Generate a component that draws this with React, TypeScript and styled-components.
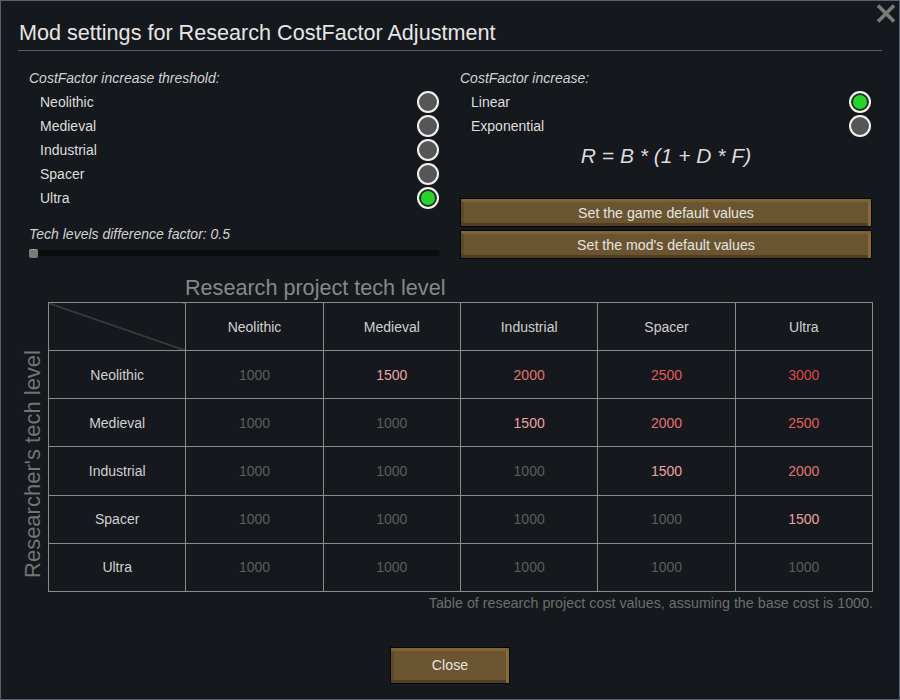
import styled, { createGlobalStyle } from "styled-components";

const GlobalStyle = createGlobalStyle`
  html, body {
    margin: 0;
    padding: 0;
    background: #15181c;
  }
  body {
    font-family: "Liberation Sans", Arial, sans-serif;
  }
`;

const levels = ["Neolithic", "Medieval", "Industrial", "Spacer", "Ultra"];

const costColor = (v: number) => {
  if (v >= 3000) return "#dc4949";
  if (v >= 2500) return "#e05d5d";
  if (v >= 2000) return "#e47373";
  if (v >= 1500) return "#eda3a3";
  return "#5d5d5d";
};

export default function App() {
  return (
    <>
      <GlobalStyle />
      <Window>
        <CloseX aria-label="close">
          <svg width="20" height="19" viewBox="0 0 20 19">
            <path d="M2 1.5 L18 17.5 M18 1.5 L2 17.5" stroke="#7b7b7b" strokeWidth="3.6" />
          </svg>
        </CloseX>

        <Header>
          <Title>Mod settings for Research CostFactor Adjustment</Title>
        </Header>

        <Settings>
          <Column>
            <SectionLabel>CostFactor increase threshold:</SectionLabel>
            {levels.map((l) => (
              <OptionRow key={l}>
                <span>{l}</span>
                <Radio $checked={l === "Ultra"} />
              </OptionRow>
            ))}
            <FactorLabel>Tech levels difference factor: 0.5</FactorLabel>
            <SliderTrack>
              <SliderThumb />
            </SliderTrack>
          </Column>

          <Column>
            <SectionLabel>CostFactor increase:</SectionLabel>
            <OptionRow>
              <span>Linear</span>
              <Radio $checked />
            </OptionRow>
            <OptionRow>
              <span>Exponential</span>
              <Radio />
            </OptionRow>
            <Formula>R = B * (1 + D * F)</Formula>
            <ButtonStack>
              <WideButton>Set the game default values</WideButton>
              <WideButton>Set the mod's default values</WideButton>
            </ButtonStack>
          </Column>
        </Settings>

        <TableSection>
          <TableTitle>Research project tech level</TableTitle>
          <SideLabelBox>
            <SideLabel>Researcher's tech level</SideLabel>
          </SideLabelBox>
          <CostTable>
            <tbody>
              <tr>
                <CornerCell />
                {levels.map((l) => (
                  <HeadCell key={l}>{l}</HeadCell>
                ))}
              </tr>
              {levels.map((r, ri) => (
                <tr key={r}>
                  <HeadCell>{r}</HeadCell>
                  {levels.map((c, ci) => {
                    const v = 1000 + Math.max(0, ci - ri) * 500;
                    return (
                      <ValueCell key={c} $color={costColor(v)}>
                        {v}
                      </ValueCell>
                    );
                  })}
                </tr>
              ))}
            </tbody>
          </CostTable>
          <Caption>
            Table of research project cost values, assuming the base cost is 1000.
          </Caption>
        </TableSection>

        <Footer>
          <CloseButton>Close</CloseButton>
        </Footer>
      </Window>
    </>
  );
}

const Window = styled.div`
  position: relative;
  box-sizing: border-box;
  width: 900px;
  height: 700px;
  border: 1px solid #586070;
  background: #15181c;
  padding: 0 17px;
  display: flex;
  flex-direction: column;
  color: #dcdcdc;
`;

const CloseX = styled.div`
  position: absolute;
  top: 3px;
  right: 3px;
  width: 20px;
  height: 19px;
  display: flex;
`;

const Header = styled.div`
  box-sizing: border-box;
  height: 50px;
  display: flex;
  align-items: flex-end;
  padding-bottom: 5px;
  border-bottom: 1px solid #5e5e5e;
`;

const Title = styled.div`
  font-size: 21.6px;
  line-height: 24px;
  color: #e6e6e6;
  padding-left: 1px;
`;

const Settings = styled.div`
  display: grid;
  grid-template-columns: 411px 412px;
  column-gap: 20px;
  margin-top: 15px;
  padding-left: 11px;
`;

const Column = styled.div`
  display: flex;
  flex-direction: column;
`;

const SectionLabel = styled.div`
  font-size: 14px;
  font-style: italic;
  line-height: 24px;
  color: #d2d2d2;
`;

const OptionRow = styled.div`
  display: flex;
  align-items: center;
  justify-content: space-between;
  height: 24px;
  padding-left: 11px;
  padding-right: 1px;
  font-size: 14px;
  color: #dedede;
`;

const Radio = styled.span<{ $checked?: boolean }>`
  box-sizing: border-box;
  width: 22px;
  height: 22px;
  border-radius: 50%;
  border: 2px solid #f2f2f2;
  background: ${(p) => (p.$checked ? "#27d42a" : "#565656")};
  box-shadow: ${(p) => (p.$checked ? "inset 0 0 0 2px #2b2b2b" : "none")};
`;

const FactorLabel = styled(SectionLabel)`
  margin-top: 12px;
`;

const SliderTrack = styled.div`
  margin-top: 4px;
  height: 6px;
  border-radius: 3px;
  background: #0b0c0e;
  display: flex;
  align-items: center;
`;

const SliderThumb = styled.div`
  width: 9px;
  height: 9px;
  border-radius: 2px;
  background: #7a7a7a;
  border-top: 1px solid #9a9a9a;
  box-sizing: border-box;
`;

const Formula = styled.div`
  height: 36px;
  line-height: 36px;
  text-align: center;
  font-size: 21px;
  font-style: italic;
  color: #dcdcdc;
`;

const ButtonStack = styled.div`
  display: flex;
  flex-direction: column;
  gap: 3px;
  margin-top: 24px;
`;

const BrownButton = styled.div`
  box-sizing: border-box;
  display: flex;
  align-items: center;
  justify-content: center;
  border: 1px solid #050505;
  background: #6b5531;
  box-shadow: inset 0 3px 0 #7e6435, inset -3px 0 0 #866b3b,
    inset 0 -3px 0 #4f3e21, inset 3px 0 0 #5f4a29;
  color: #e4e4e4;
  font-size: 14.2px;
`;

const WideButton = styled(BrownButton)`
  height: 29px;
`;

const TableSection = styled.div`
  display: grid;
  grid-template-columns: 30px 825px;
  margin-top: 17px;
`;

const TableTitle = styled.div`
  grid-column: 2;
  margin-left: 137px;
  font-size: 21.6px;
  line-height: 24px;
  height: 26px;
  color: #888888;
`;

const SideLabelBox = styled.div`
  grid-column: 1;
  display: flex;
  align-items: center;
  justify-content: center;
  padding-top: 48px;
  padding-bottom: 14px;
`;

const SideLabel = styled.div`
  writing-mode: vertical-rl;
  transform: rotate(180deg);
  font-size: 22px;
  color: #747474;
  white-space: nowrap;
`;

const CostTable = styled.table`
  grid-column: 2;
  width: 825px;
  table-layout: fixed;
  border-collapse: collapse;
  font-size: 14px;
  td {
    border: 1px solid #8a8a8a;
    height: 47px;
    padding: 0;
    text-align: center;
  }
`;

const CornerCell = styled.td`
  background: linear-gradient(
    to top right,
    transparent calc(50% - 0.6px),
    #7a7a7a 50%,
    transparent calc(50% + 0.6px)
  );
`;

const HeadCell = styled.td`
  color: #d0d0d0;
`;

const ValueCell = styled.td<{ $color: string }>`
  color: ${(p) => p.$color};
`;

const Caption = styled.div`
  grid-column: 2;
  text-align: right;
  font-size: 14.3px;
  line-height: 18px;
  margin-top: 2px;
  color: #6e6e6e;
`;

const Footer = styled.div`
  display: flex;
  justify-content: center;
  margin-top: 35px;
`;

const CloseButton = styled(BrownButton)`
  width: 120px;
  height: 37px;
`;
